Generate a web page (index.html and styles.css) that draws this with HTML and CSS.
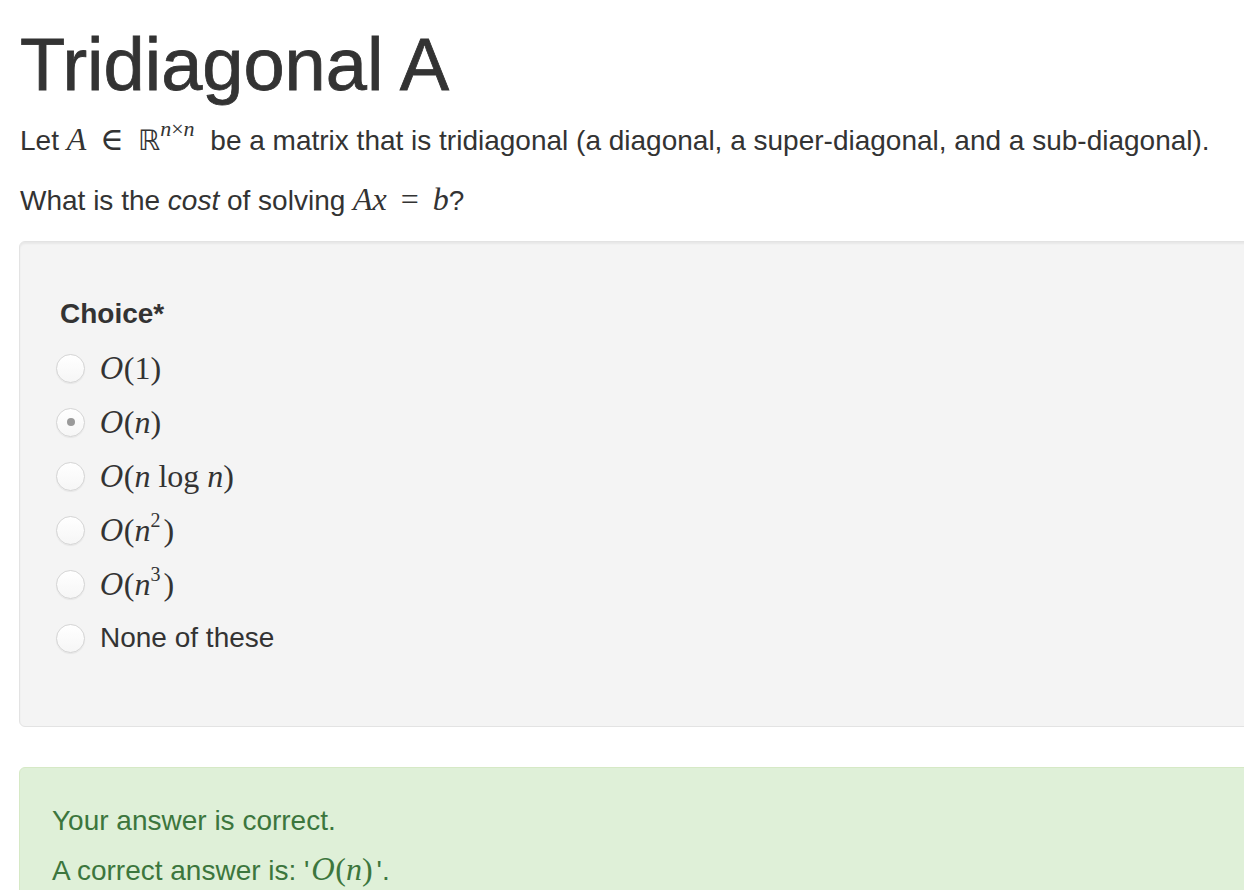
FILE: index.html
```html
<!DOCTYPE html>
<html>
<head>
<meta charset="utf-8">
<link rel="stylesheet" href="styles.css">
</head>
<body>
<div class="page">
  <h1 class="title">Tridiagonal A</h1>
  <p class="text">Let <span class="m"><i>A</i> <span class="rel">∈</span> <span class="bb">ℝ</span><sup class="msup"><i>n</i>×<i>n</i></sup></span> be a matrix that is tridiagonal (a diagonal, a super-diagonal, and a sub-diagonal).</p>
  <p class="text">What is the <em>cost</em> of solving <span class="m"><i>Ax</i> <span class="rel">=</span> <i>b</i></span>?</p>

  <div class="well">
    <div class="label">Choice*</div>
    <div class="options">
      <div class="opt"><span class="radio"></span><span class="m"><span class="cal">O</span>(1)</span></div>
      <div class="opt"><span class="radio checked"></span><span class="m"><span class="cal">O</span>(<i>n</i>)</span></div>
      <div class="opt"><span class="radio"></span><span class="m"><span class="cal">O</span>(<i>n</i> log <i>n</i>)</span></div>
      <div class="opt"><span class="radio"></span><span class="m"><span class="cal">O</span>(<i>n</i><sup class="s">2</sup>)</span></div>
      <div class="opt"><span class="radio"></span><span class="m"><span class="cal">O</span>(<i>n</i><sup class="s">3</sup>)</span></div>
      <div class="opt"><span class="radio"></span><span class="plain">None of these</span></div>
    </div>
  </div>

  <div class="alert">
    <p class="fb">Your answer is correct.</p>
    <p class="fb">A correct answer is: '<span class="m ans"><span class="cal">O</span>(<i>n</i>)</span>'.</p>
  </div>
</div>
</body>
</html>
```

FILE: styles.css
```css
html, body {
  margin: 0;
  padding: 0;
  overflow: hidden;
  background: #fff;
}
body {
  font-family: "Liberation Sans", Arial, sans-serif;
  color: #333;
}
.page {
  width: 1300px;
  padding-left: 19px;
}
.title {
  font-size: 74px;
  font-weight: 400;
  line-height: 81px;
  margin: 24px 0 0 1px;
  -webkit-text-stroke: 0.8px #333;
}
.text {
  font-size: 28px;
  line-height: 40px;
  margin: 16px 0 0 1px;
}
.text + .text {
  margin-top: 20px;
}
.m {
  font-family: "Liberation Serif", "DejaVu Serif", serif;
  font-size: 32px;
  line-height: 1;
}
.m i {
  font-style: italic;
}
.rel {
  margin: 0 6px;
}
.bb {
  font-family: "DejaVu Sans", sans-serif;
  font-size: 28px;
}
.msup {
  font-size: 22px;
  vertical-align: 14px;
  line-height: 0;
  margin-right: 8px;
}
.s {
  font-size: 20px;
  vertical-align: 14px;
  line-height: 0;
  margin-right: 3px;
}
.cal {
  font-style: italic;
  font-family: "DejaVu Serif", serif;
  font-size: 29px;
}
.ans {
  margin: 0 4px 0 2px;
}
.well {
  margin-top: 20px;
  height: 486px;
  box-sizing: border-box;
  background: #f4f4f4;
  border: 1px solid #e3e3e3;
  border-radius: 6px;
  box-shadow: inset 0 2px 2px rgba(0,0,0,0.05);
  padding: 52px 40px 0 40px;
}
.label {
  font-weight: 700;
  font-size: 28px;
  line-height: 40px;
}
.options {
  margin-top: 7px;
  display: flex;
  flex-direction: column;
}
.opt {
  height: 54px;
  display: flex;
  align-items: center;
  gap: 15px;
  margin-left: -4px;
}
.radio {
  width: 27px;
  height: 27px;
  border-radius: 50%;
  border: 1px solid #d4d4d4;
  background: linear-gradient(#ffffff, #f6f6f6);
  box-shadow: 0 1px 1px rgba(0,0,0,0.06);
  display: flex;
  align-items: center;
  justify-content: center;
  flex: none;
}
.radio.checked::after {
  content: "";
  width: 8px;
  height: 8px;
  border-radius: 50%;
  background: #9a9a9a;
}
.plain {
  font-size: 28px;
}
.alert {
  margin-top: 40px;
  background: #dff0d8;
  border: 1px solid #d6e9c6;
  border-radius: 6px;
  color: #3c763d;
  padding: 33px 32px 20px 32px;
  height: 200px;
}
.fb {
  font-size: 28px;
  line-height: 40px;
  margin: 0 0 10px 0;
}
```
